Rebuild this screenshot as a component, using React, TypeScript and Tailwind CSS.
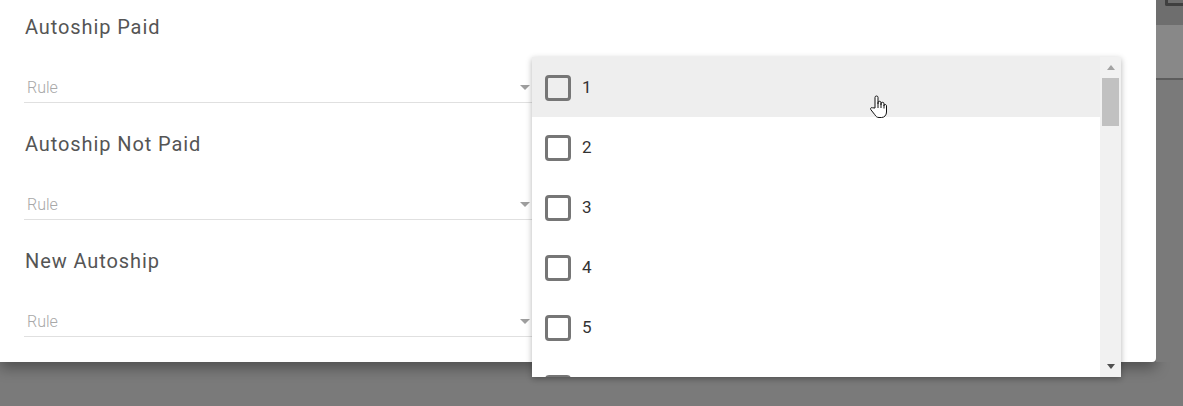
import { useState } from "react";

const sections = ["Autoship Paid", "Autoship Not Paid", "New Autoship"];
const options = ["1", "2", "3", "4", "5", "6"];

function Caret() {
  return (
    <svg width="10" height="5" viewBox="0 0 10 5" className="shrink-0">
      <path d="M0 0h10L5 5z" fill="#9e9e9e" />
    </svg>
  );
}

function Box() {
  return (
    <svg width="26" height="26" viewBox="0 0 26 26" className="shrink-0">
      <rect x="1.5" y="1.5" width="23" height="23" rx="2.5" fill="none" stroke="#767676" strokeWidth="3" />
    </svg>
  );
}

function HandCursor() {
  return (
    <svg width="18" height="24" viewBox="0 0 18 24" className="absolute left-[869px] top-[95px]">
      <path
        d="M6 13V2.5a1.5 1.5 0 0 1 3 0V9V7.8a1.5 1.5 0 0 1 3 0V10V8.8a1.5 1.5 0 0 1 3 0V11V10a1.5 1.5 0 0 1 2.5 0.5V17c0 3-2 5.5-5 5.5H10c-2 0-3-1-4.2-2.8L1.8 14.6c-0.8-1.2 0.6-2.6 1.8-1.8z"
        fill="#fff"
        stroke="#111"
        strokeWidth="1"
        strokeLinejoin="round"
      />
      <path d="M9 9v4M12 10v3M15 11v2.5" stroke="#111" strokeWidth="1" />
    </svg>
  );
}

export default function App() {
  const [checked, setChecked] = useState<string[]>([]);

  const toggle = (v: string) =>
    setChecked((c) => (c.includes(v) ? c.filter((x) => x !== v) : [...c, v]));

  return (
    <div
      className="relative w-[1183px] h-[406px] overflow-hidden bg-[#7a7a7a]"
      style={{ fontFamily: "Roboto, 'Liberation Sans', sans-serif" }}
    >
      <div className="flex">
        <div className="w-[1156px] h-[362px] bg-white rounded-br-[4px] pt-[15px] pl-[24px] shadow-[0_6px_14px_rgba(0,0,0,0.35)]">
          {sections.map((s) => (
            <div key={s} className="h-[117px]">
              <div className="h-6 leading-6 text-[20px] tracking-[0.9px] text-[#555] pl-px">{s}</div>
              <div className="mt-[33px] h-[31px] w-[508px] border-b border-[#e0e0e0] flex items-center justify-between pl-[3px] pr-[2px]">
                <span className="text-[16px] font-light text-[#a8a8a8] pt-px">Rule</span>
                <Caret />
              </div>
            </div>
          ))}
        </div>

        {/* strip of the page behind the dialog */}
        <div className="flex-1 flex flex-col">
          <div className="h-[25px] bg-[#6e6e6e] pl-[9px]">
            <div className="h-[6px] border-l-[3px] border-b-[3px] border-[#3f3f3f] rounded-bl-[2px]" />
          </div>
          <div className="h-[55px] bg-[#888888] border-b-2 border-[#5c5c5c]" />
          <div className="flex-1 bg-[#7a7a7a]" />
        </div>
      </div>

      {/* open select menu */}
      <div className="absolute left-[532px] top-[57px] w-[589px] h-[320px] bg-white flex shadow-[0_2px_6px_rgba(0,0,0,0.3)] overflow-hidden">
        <div className="flex-1 overflow-hidden">
          {options.map((o, i) => (
            <div
              key={o}
              onClick={() => toggle(o)}
              className={`h-[60px] flex items-center pt-[2px] pl-[13px] gap-[11px] text-[17px] text-[#333] ${i === 0 ? "bg-[#eeeeee]" : ""}`}
            >
              <Box />
              <span>{o}</span>
            </div>
          ))}
        </div>
        <div className="w-[21px] bg-[#f1f1f1] flex flex-col items-center">
          <div className="h-[21px] flex items-center justify-center">
            <svg width="8" height="5" viewBox="0 0 8 5">
              <path d="M0 5L4 0l4 5z" fill="#a3a3a3" />
            </svg>
          </div>
          <div className="w-[17px] h-[48px] bg-[#c1c1c1]" />
          <div className="flex-1" />
          <div className="h-[21px] flex items-center justify-center">
            <svg width="8" height="5" viewBox="0 0 8 5">
              <path d="M0 0h8L4 5z" fill="#505050" />
            </svg>
          </div>
        </div>
      </div>

      <HandCursor />
    </div>
  );
}
